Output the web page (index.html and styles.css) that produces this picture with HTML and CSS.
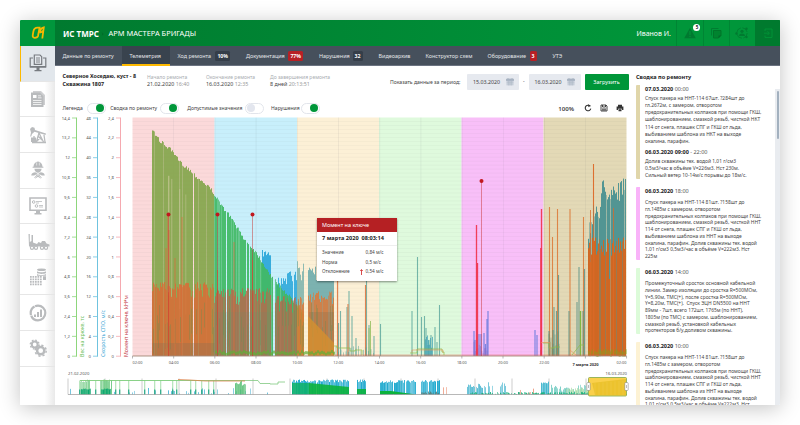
FILE: index.html
```html
<!DOCTYPE html>
<html lang="ru">
<head>
<meta charset="utf-8">
<title>АРМ мастера бригады</title>
<link rel="stylesheet" href="styles.css">
</head>
<body>
<div class="app">
  <aside class="rail">
    <div class="logo"><svg viewBox="0 0 14 14"><path d="M3.800 11.800C1.800 11.800 1.500 10.500 1.800 8.800L2.400 5.400C2.800 3 4.200 1.600 6.600 1.600H8.600L7 10C6.600 11.500 5.500 11.800 3.800 11.800ZM8.800 6.600C9 3.500 10.500 1.700 12.800 1.300L11.300 12.500M8.800 6.600C10.300 6.500 11.300 5.800 12 4.800" fill="none" stroke="#f5b800" stroke-width="1.800"/></svg></div>
    <div class="rail-item active"><svg viewBox="0 0 18 18"><g fill="none" stroke="#777b80" stroke-width="1.200"><path d="M4 4H1.200V13H16.800V4H14"/><path d="M5.300 1H11L12.700 2.700V10.300H5.300Z" fill="#e6eaef"/><path d="M7 4H11M7 6H11M7 8H11" stroke-width=".9"/></g><path d="M1 12H17V13.500H1ZM7.500 13.500H10.500V16H7.500ZM5.500 16H12.500V17.200H5.500Z" fill="#777b80"/></svg></div>
    <div class="rail-item"><svg viewBox="0 0 18 18"><path d="M4 1H12L16 5V15H14V6L11 3H4Z" opacity=".7"/><path d="M2 2.500H11L14.500 6V17H2ZM4 5V8H7.500V5ZM9 5.500V6.300H12V5.500ZM9 7.500V8.300H12.500V7.500ZM4 10V10.800H12.500V10ZM4 12V12.800H12.500V12ZM4 14V14.800H12.500V14Z" fill-rule="evenodd"/></svg></div>
    <div class="rail-item"><svg viewBox="0 0 18 18"><path d="M1 3L3 1L5.500 1.800L6 4L17 7.500L16.500 9L5.500 5.800L3 8L2.200 10.500H1.200L2 6.500Z"/><path d="M10 7L7 17M10 7L15 17M9 10L13 14M12 11L8 15M3 16.500H17M3 12V16M5 10V16M15 9L16 16" fill="none" stroke="#b9bbbd" stroke-width="1.300"/><path d="M2 11.500H7V16H2Z"/></svg></div>
    <div class="rail-item"><svg viewBox="0 0 18 20"><path d="M4 6.500C4 3 6 1 9 .5C12 1 14 3 14 6.500H15V7.500H3V6.500ZM5 8.500H13C13 11 11 13 9 13S5 11 5 8.500ZM1.500 16C1.500 13.500 4 12.500 6 12.500L9 14.500L12 12.500C14 12.500 16.500 13.500 16.500 16H13L12 15H6L5 16Z"/><path d="M5 18.500L7 16.800H11L13 18.500M6 15L12 19M12 15L6 19" stroke="#b9bbbd" fill="none" stroke-width="1"/><path d="M7.500 1.500V5M10.500 1.500V5" stroke="#fff" stroke-width=".6"/></svg></div>
    <div class="rail-item"><svg viewBox="0 0 18 18"><g fill="none" stroke="#b9bbbd"><path d="M1 1H17V13.200H1Z" stroke-width="1.600"/><circle cx="4.700" cy="5" r="1.300"/><circle cx="7.500" cy="9" r="1.300"/><path d="M7 4.500H13M10 8.500H14M10 10H14M7 6H10" stroke-width=".8"/></g><path d="M7 14H11V16H12.500V17.500H5.500V16H7Z"/></svg></div>
    <div class="rail-item"><svg class="wide" viewBox="0 0 22 18"><path d="M.5 1H1.800V9L3.500 8V2H5V9.500L9 11L10.500 9L13 10L14 8H17L18.500 10.500L21.500 11.500V13.500H1Z"/><g fill="#fff" stroke="#b9bbbd" stroke-width="1.200"><circle cx="4" cy="14.800" r="1.600"/><circle cx="8" cy="14.800" r="1.600"/><circle cx="14" cy="14.800" r="1.600"/><circle cx="18" cy="14.800" r="1.600"/></g></svg></div>
    <div class="rail-item"><svg viewBox="0 0 18 18"><ellipse cx="12.500" cy="1.800" rx="4.500" ry="1.300"/><path d="M8 3.300C10 4.600 15 4.600 17 3.300V5C15 6.200 10 6.200 8 5ZM8 6.100C10 7.400 15 7.400 17 6.100V7.700H8ZM14 8.300H17V12H14Z"/><path d="M1 8.900H13.500M1 11.400H13.500M1 13.900H13.500M1 16.400H13.500" stroke="#b9bbbd" stroke-width="1.700" stroke-dasharray="1.700 .8" fill="none"/></svg></div>
    <div class="rail-item"><svg viewBox="0 0 18 18"><circle cx="9" cy="9" r="7.300" fill="none" stroke="#b9bbbd" stroke-width="2.200" stroke-dasharray="20 .6 10 .6"/><path d="M5 10.500H7V13H5ZM8 8H10V13H8ZM11 5.500H13V13H11Z"/></svg></div>
    <div class="rail-item"><svg viewBox="0 0 18 18"><g fill="none" stroke="#b9bbbd"><circle cx="5.700" cy="5.500" r="2.900" stroke-width="2"/><circle cx="5.700" cy="5.500" r="4.400" stroke-width="1.400" stroke-dasharray="1.700 1.750"/><circle cx="11.700" cy="11.700" r="3.600" stroke-width="2.500"/><circle cx="11.700" cy="11.700" r="5.500" stroke-width="1.500" stroke-dasharray="2.200 2.120"/></g></svg></div>
    <div class="rail-rest"></div>
  </aside>
  <div class="body">
    <header class="top">
      <span class="brand">ИС ТМРС</span><span class="chev">›</span><span class="place">АРМ МАСТЕРА БРИГАДЫ</span>
      <span class="user">Иванов И.</span>
      <div class="act"><svg viewBox="0 0 12 12"><path d="M6 .8L11.800 11.200H.2Z"/><path d="M6 4V8M6 8.800V10" stroke="#009438" stroke-width="1.200"/></svg><b class="dot">5</b></div>
      <div class="act"><svg viewBox="0 0 12 12"><path d="M1.500 8.500V1.500H8.500" fill="none" stroke="#007a30" stroke-width=".9"/><path d="M3.500 3.500H11V8.500L8.500 11H3.500Z" fill="#00842f" stroke="#007329" stroke-width=".9"/><path d="M8.500 11V8.500H11Z" fill="#00682a"/></svg></div>
      <div class="act"><svg class="big" viewBox="0 0 14 12"><circle cx="7" cy="6" r="5.200" fill="none" stroke="#007a30" stroke-width=".8" stroke-dasharray="6.500 1.600"/><circle cx="7" cy="4.300" r="1.600"/><path d="M4 9C4 5.800 10 5.800 10 9Z"/><circle cx="1.500" cy="6.500" r="1.200"/><circle cx="11.500" cy="1.700" r="1.200"/><circle cx="11.500" cy="10" r="1.200"/></svg></div>
      <div class="act exit"><svg viewBox="0 0 12 12"><path d="M3 4V2H10V10.500H3V8.500M2 6.200H7M5.500 4.300L7.400 6.200L5.500 8.100" fill="none" stroke="#009438" stroke-width=".9"/></svg></div>
    </header>
    <nav class="tabs">
      <div class="tab t1">Данные по ремонту</div>
      <div class="tab t2 on">Телеметрия</div>
      <div class="tab t3">Ход ремонта<b>10%</b></div>
      <div class="tab t4">Документация<b class="red">77%</b></div>
      <div class="tab t5">Нарушения<b>32</b></div>
      <div class="tab t6">Видеоархив</div>
      <div class="tab t7">Конструктор схем</div>
      <div class="tab t8">Оборудование<b class="red">3</b></div>
      <div class="tab t9">УТЭ</div>
    </nav>
    <div class="content">
      <main class="work">
        <section class="info">
          <div class="well">Северное Хоседаю, куст - 8<br>Скважина 1807</div>
          <div class="fact f1"><i>Начало ремонта</i><span>21.02.2020 <em>16:40</em></span></div>
          <div class="fact f2"><i>Окончание ремонта</i><span>16.03.2020 <em>12:35</em></span></div>
          <div class="fact f3"><i>До завершения ремонта</i><span>8 дней <em>20:13:51</em></span></div>
          <div class="period">Показать данные за период:</div>
          <div class="date">15.03.2020<svg viewBox="0 0 8 8"><path d="M.5 1H7.500V7.500H.5Z" fill="#cdd4de"/><path d="M.5 1H7.500V2.800H.5ZM2 0V1.500M6 0V1.500" fill="#a7b2c1" stroke="#a7b2c1" stroke-width=".8"/><path d="M.5 4.500H7.500M.5 6H7.500M2.500 3V7.500M4 3V7.500M5.500 3V7.500" stroke="#a7b2c1" stroke-width=".4"/></svg></div>
          <div class="dash">-</div>
          <div class="date">16.03.2020<svg viewBox="0 0 8 8"><path d="M.5 1H7.500V7.500H.5Z" fill="#cdd4de"/><path d="M.5 1H7.500V2.800H.5ZM2 0V1.500M6 0V1.500" fill="#a7b2c1" stroke="#a7b2c1" stroke-width=".8"/><path d="M.5 4.500H7.500M.5 6H7.500M2.500 3V7.500M4 3V7.500M5.500 3V7.500" stroke="#a7b2c1" stroke-width=".4"/></svg></div>
          <div class="load">Загрузить</div>
        </section>
        <section class="switches">
          <span class="s1">Легенда</span><u class="sw"></u>
          <span class="s2">Сводка по ремонту</span><u class="sw"></u>
          <span class="s3">Допустимые значения</span><u class="sw off"></u>
          <span class="s4">Нарушения</span><u class="sw"></u>
          <b class="zoomv">100%</b>
          <svg class="tool" viewBox="0 0 8 8"><path d="M6.300 2.300A2.800 2.800 0 1 0 6.800 4.600" fill="none" stroke="#333" stroke-width="1.100"/><path d="M4 .2L6.600 1.500L4.400 3.200Z" fill="#333"/></svg>
          <svg class="tool" viewBox="0 0 8 8"><path d="M1 1H6L7 2V7H1ZM2.500 1V3H5.500V1M2 5H6M2 6H6" fill="none" stroke="#333" stroke-width=".9"/></svg>
          <svg class="tool" viewBox="0 0 8 8"><path d="M2 .8H6V2.500H2ZM.6 2.600H7.400V6H6V4.800H2V6H.6ZM2.500 5.300H5.500V7.300H2.500Z" fill="#333"/></svg>
        </section>
        <div class="plot">
          <svg id="chart" viewBox="55 114 577 291"></svg>
          <div class="tip">
            <div class="tip-head">Момент на ключе</div>
            <div class="tip-date">7 марта 2020&nbsp; 08:03:14</div>
            <div class="tip-rows">
              <span>Значение</span><span></span><span>0,84 м/с</span>
              <span>Норма</span><span></span><span>0,5 м/с</span>
              <span>Отклонение</span><span class="up"><svg viewBox="0 0 3 6"><path d="M1.500 6V1M.3 2L1.500.5L2.700 2" fill="none" stroke="#d02020" stroke-width=".8"/></svg></span><span>0,54 м/с</span>
            </div>
          </div>
        </div>
      </main>
      <aside class="log">
        <h3>Сводка по ремонту</h3>
        <div class="log-body">
          <div class="entries">
            <article class="e1">
              <h4><b>07.03.2020</b> 00:00</h4>
              <p>Спуск пакера на ННТ-114 67шт. ?284шт до<br>гл.2672м, с замером, отворотом<br>предохранительных колпаков при помощи ГКШ,<br>шаблонированием, смазкой резьб, чисткой НКТ<br>114 от снега, плашек СПГ и ГКШ от льда,<br>выбиванием шаблона из НКТ на выходе<br>окалина, парафин.</p>
              <h4 class="second"><b>06.03.2020 09:00</b> - 22:00</h4>
              <p>Долив скважины тех. водой 1,01 г/см3<br>0,5м3/час в объёме V=226м3. Нст 230м.<br>Сильный ветер 10-14м/с порывы до 18м/с.</p>
            </article>
            <article class="e2">
              <h4><b>06.03.2020</b> 18:00</h4>
              <p>Спуск пакера на ННТ-114 81шт. ?158шт до<br>гл.1485м с замером, отворотом<br>предохранительных колпаков при помощи ГКШ,<br>шаблонированием, смазкой резьб, чисткой ННТ<br>114 от снега, плашек СПГ и ГКШ от льда,<br>выбиванием шаблона из ННТ на выходе<br>окалина, парафин. Долив скважины тех. водой<br>1,01 г/см3 0,5м3/час в объёме V=222м3. Нст<br>225м</p>
            </article>
            <article class="e3">
              <h4><b>06.03.2020</b> 14:00</h4>
              <p>Промежуточный сросток основной кабельной<br>линии. Замер изоляции до сростка R=500МОм,<br>Y=5,90м, ТМС(+), после сростка R=500МОм,<br>Y=8,20м, ТМС(+).&nbsp; Спуск ЭЦН DN5500 на ННТ<br>89мм - 7шт, всего 172шт, 1765м (по ННТ),<br>1805м (по ТМС) с замером, шаблонированием,<br>смазкой резьб, установкой кабельных<br>протекторов б/у,доливом скважины.</p>
            </article>
            <article class="e4">
              <h4><b>06.03.2020</b> 10:00</h4>
              <p>Спуск пакера на ННТ-114 81шт. ?158шт до<br>гл.1485м с замером, отворотом<br>предохранительных колпаков при помощи ГКШ,<br>шаблонированием, смазкой резьб, чисткой ННТ<br>114 от снега, плашек СПГ и ГКШ от льда,<br>выбиванием шаблона из ННТ на выходе<br>окалина, парафин. Долив скважины тех. водой<br>1,01 г/см3 0,5м3/час в объёме V=222м3. Нст</p>
            </article>
          </div>
          <div class="scroll"><div class="thumb"></div></div>
        </div>
      </aside>
    </div>
  </div>
</div>
<script src="chart.js"></script>
</body>
</html>
```

FILE: styles.css
```css
* { box-sizing: border-box; }
body { margin: 0; width: 800px; height: 425px; overflow: hidden; background: #fff; padding: 20px; font-family: "Noto Sans", "Open Sans", sans-serif; font-size: 5px; color: #444; }
.app { display: flex; width: 760px; height: 385px; border-radius: 1px; overflow: hidden; background: #fff; }
body::before { content: ""; position: absolute; left: 20px; top: 20px; width: 760px; height: 385px; box-shadow: 0 3px 20px rgba(0,0,0,.24); z-index: -1; }
b { font-weight: 700; }

.rail { width: 35px; flex: none; display: flex; flex-direction: column; background: linear-gradient(90deg, #fff 70%, #e9e9e9); }
.logo { height: 26px; flex: none; background: #00963c; display: flex; align-items: center; justify-content: center; }
.logo svg { width: 14px; height: 14px; }
.rail-item { height: 35.65px; flex: none; display: flex; align-items: center; justify-content: center; border-bottom: 1px solid #e6e6e6; }
.rail-item svg { width: 18px; height: 18px; fill: #b9bbbd; }
.rail-item svg.wide { width: 22px; margin-left: 3px; }
.rail-item.active { background: #e2e7ec; border-left: 1px solid #fdb900; }
.rail-rest { flex: 1; }

.body { flex: 1; min-width: 0; display: flex; flex-direction: column; }
.top { height: 26px; flex: none; display: flex; align-items: center; padding-left: 8px; color: #fff; background: linear-gradient(90deg, #007a2f, #00963a 85%); white-space: nowrap; }
.brand { width: 38.500px; font-size: 8px; font-weight: 700; }
.chev { width: 7px; color: #006226; font-size: 7px; }
.place { font-size: 7.450px; flex: 1; }
.user { width: 40px; font-size: 7px; }
.act { position: relative; width: 26.2px; height: 26px; border-left: 1px solid #008534; display: flex; align-items: center; justify-content: center; }
.act svg { width: 12px; height: 12px; fill: #007a30; }
.act svg.big { width: 14px; }
.act.exit { width: 25px; background: #007a2e; border: 0; }
.dot { position: absolute; left: 16px; top: 4px; width: 7px; height: 7px; border-radius: 50%; background: #fff; color: #222; font-size: 4.500px; line-height: 7px; text-align: center; }

.tabs { height: 20px; flex: none; display: flex; background: #46505c; color: #e4e6e9; font-size: 5.450px; white-space: nowrap; border-bottom: 1px solid #6b7381; }
.tab { height: 19px; display: flex; align-items: center; padding-left: 8px; flex: none; }
.tab.on { background: #39434e; border-bottom: 2px solid #fdb900; height: 20px; padding-top: 1px; }
.tab b { margin-left: auto; margin-right: 8px; height: 10px; line-height: 10px; padding: 0 2px; border-radius: 1.500px; background: #353e49; color: #fff; font-size: 5.200px; }
.tab b.red { background: #b72025; }
.t1 { width: 66.500px; padding-left: 7.500px; font-size: 5.300px; }
.t2 { width: 48px; }
.t3 { width: 68.500px; }
.t4 { width: 73px; }
.t5 { width: 59.500px; }
.t6 { width: 47px; }
.t7 { width: 62px; }
.t8 { width: 65px; }

.content { flex: 1; min-height: 0; display: flex; }
.work { width: 577px; flex: none; display: flex; flex-direction: column; }
.info { height: 31px; flex: none; display: flex; padding: 7px 0 0 7.500px; white-space: nowrap; }
.well { width: 84.500px; font-size: 5.350px; font-weight: 700; color: #222; line-height: 7.600px; }
.fact { line-height: 7.800px; font-size: 5.350px; padding-top: .5px; }
.fact i { display: block; font-style: normal; color: #a9adb1; font-size: 5px; }
.fact em { font-style: normal; color: #999; }
.fact span { display: block; }
.f1 { width: 59px; }
.f2 { width: 64px; }
.f3 { width: 120px; }
.period { width: 77px; line-height: 18px; font-size: 5.100px; }
.date { width: 52px; height: 16px; background: #e6e9ef; border-radius: 1px; display: flex; align-items: center; justify-content: space-between; padding: 0 5.500px 0 6px; font-size: 5.300px; margin-top: 1px; }
.date svg { width: 8px; height: 8px; }
.dash { width: 9.500px; text-align: center; line-height: 17px; }
.load { width: 44px; height: 16px; margin: 1px 0 0 4px; background: #009639; color: #fff; border-radius: 1px; text-align: center; line-height: 16px; font-size: 5.500px; }

.switches { height: 17px; flex: none; display: flex; align-items: center; padding: 5px 0 0 7.500px; font-size: 5.050px; white-space: nowrap; }
.sw { width: 19px; height: 11px; flex: none; border: 1px solid #e2e5eb; border-radius: 6px; display: flex; align-items: center; justify-content: flex-end; padding-right: 1px; }
.sw::before { content: ""; width: 8px; height: 8px; border-radius: 50%; background: #009639; }
.sw.off { justify-content: flex-start; padding-left: 1px; }
.sw.off::before { background: #e3e6ee; }
.s1 { width: 24.500px; }
.s2 { width: 55px; padding-left: 4.500px; }
.s3 { width: 66px; padding-left: 8px; }
.s4 { width: 38px; padding-left: 7.500px; }
.zoomv { margin-left: 238px; width: 26px; font-size: 6.100px; font-weight: 600; }
.tool { width: 8px; height: 8px; margin-right: 8px; flex: none; }

.plot { flex: 1; position: relative; }
#chart { display: block; width: 577px; height: 291px; }
#chart text { font-size: 4.200px; fill: #555; }
#chart .axis-title { font-size: 5.250px; }
.tip { position: absolute; left: 262px; top: 104px; width: 79.500px; height: 63px; background: #fff; box-shadow: 0 1px 2px rgba(0,0,0,.45); white-space: nowrap; }
.tip-head { height: 14px; line-height: 15px; padding-left: 5px; background: #b52023; color: #fff; font-size: 5.450px; }
.tip-date { height: 14px; line-height: 13.500px; padding-left: 5px; font-size: 5.600px; font-weight: 700; color: #222; border-bottom: 1px solid #eee; }
.tip-rows { display: grid; grid-template-columns: 38px 5.500px 1fr; grid-auto-rows: 9.500px; line-height: 9.500px; padding: 2px 0 0 5px; font-size: 4.700px; }
.up { display: flex; align-items: center; }
.up svg { width: 3px; height: 6px; }

.log { width: 148px; flex: none; display: flex; flex-direction: column; white-space: nowrap; }
.log h3 { margin: 0; height: 19px; flex: none; line-height: 7px; padding: 8px 0 0 4px; font-size: 5.600px; color: #222; }
.log-body { height: 320px; flex: none; display: flex; overflow: hidden; }
.entries { width: 143px; height: 320px; overflow: hidden; padding-left: 4px; }
.log article { border-left: 4px solid #e0d6aa; border-radius: 1px; padding-left: 5px; }
.log h4 { margin: 0; height: 10px; line-height: 9px; font-size: 5.500px; font-weight: 400; color: #555; }
.log h4 b { color: #222; }
.log p { margin: 0; font-size: 4.900px; line-height: 6.750px; color: #444; }
.e1 { height: 94px; }
.e1 p { line-height: 7.150px; }
.log h4.second { margin-top: 3px; height: 10px; }
.log .e2 { height: 73px; margin-top: 8px; border-color: #f9b3f9; }
.log .e3 { height: 65.500px; margin-top: 8px; border-color: #dcfbd9; }
.log .e4 { height: 80px; margin-top: 8.500px; border-color: #fdf2d4; }
.e2 h4, .e3 h4, .e4 h4 { margin-bottom: 2px; }
.scroll { width: 5px; background: #e9ecf0; padding: 2px 1px 0 1.500px; margin-top: 4px; }
.thumb { height: 48px; background: #a3b1bf; border-radius: 1px; }
```

FILE: chart.js
```js
const NS = "http://www.w3.org/2000/svg";
const svg = document.getElementById("chart");
let seed = 7;
const rnd = () => (seed = (seed * 16807) % 2147483647) / 2147483647;
function el(name, attrs, text) {
  const n = document.createElementNS(NS, name);
  for (const k in attrs) n.setAttribute(k, attrs[k]);
  if (text) n.textContent = text;
  svg.appendChild(n);
}
const rect = (x, y, w, h, fill, o = 1) => el("rect", { x, y, width: w, height: h, fill, opacity: o });
const line = (x1, y1, x2, y2, stroke, w = 1, o = 1) => el("line", { x1, y1, x2, y2, stroke, "stroke-width": w, opacity: o });
const bar = (x, top, fill, w = 1, o = .8) => rect(x - w / 2, top, w, BASE - top, fill, o);
const BASE = 356, L = 132.5, T = 117.5;

/* scales */
function axis(x, max, color, title, tcolor) {
  for (let i = 0; i < 13; i++) {
    const y = 118 + i * 19.85;
    line(x - 4.500, y, x, y, color, .8);
    el("text", { x: x - 6.500, y: y + 1.600, "text-anchor": "end" }, String(+(max * (12 - i) / 12).toFixed(1)).replace(".", ","));
  }
  line(x, 117.600, x, 356.600, color, 1);
  el("text", { class: "axis-title", transform: `translate(${x + 7} 357) rotate(-90)`, style: `fill:${tcolor}` }, title);
}
axis(76.500, 14.400, "#8dd67c", "Вес на крюке, тс", "#6cc05a");
axis(97.500, 48, "#6fc3df", "Скорость СПО, м/с", "#3fa9d6");
axis(120.500, 2.400, "#f5a9b0", "Момент на ключе, kН*м", "#c03038");

/* period bands and grid */
[["#fbd9da", 132.500], ["#c8effb", 214.500], ["#fcf0d6", 297], ["#dffadd", 379], ["#f8bff8", 461.500], ["#e3d9b6", 543.500]]
  .forEach(([c, x], i, a) => rect(x, T, (a[i + 1] ? a[i + 1][1] : 626.500) - x, BASE - T, c));
for (let y = 121.500; y < BASE; y += 3.970) line(L, y, 626.500, y, "#555", .5, .07);
for (let x = L + 41.200; x < 626; x += 41.200) line(x, T, x, BASE, "#667", .6, .14);

/* hook weight */
const curve = [[152.500,132],[155,133],[160,141],[170,149],[181,163],[190,170],[197,177],[202,181],[209,187],[214,193],[220,204],[227,212],[235,224],[245,240],[256,252],[263,263],[272,277],[277,283],[290,297],[302,312],[310,317],[334,343]];
const at = x => {
  for (let i = 1; i < curve.length; i++) if (x <= curve[i][0]) {
    const [a, b] = curve[i - 1], [c, d] = curve[i];
    return b + (d - b) * (x - a) / (c - a);
  }
  return 343;
};
/* speed behind the weight */
for (let x = 262.500; x < 271; x += 1) bar(x, 250 + rnd() * 7, "#2fa8da", 1, .95);
for (let x = 276.500; x < 297; x += 1) if (rnd() > .12) bar(x, 272 + rnd() * 18 - (x - 276) * .4, "#2fa8da", 1, .9);
for (let x = 297.500; x < 304; x += 1) bar(x, 260 + rnd() * 22, "#6aa9a6", 1, .75);
for (let x = 308.500; x < 334; x += 1) bar(x, 262 + rnd() * 20, "#5ba3a6", 1, .8);
for (let x = 152.500; x < 304; x += 1) {
  if ([193.500, 226.500, 246.500, 249.500, 273.500, 274.500].includes(x)) continue;
  const c = x < 214.500 ? "#84a64c" : "#41b964";
  bar(x, at(x) + rnd() * 4 - 2, c, 1, rnd() > .14 ? .93 : .72);
}
el("path", { d: "M297 305L304 312V356H297Z", fill: "#b0972e", opacity: .7 });
[[168.500,.8],[171.500,.5],[179.500,.5],[185.500,.4]].forEach(([x, o]) => rect(x, at(x) + 28, .7, 120, "#f5dfc8", o));

/* torque */
for (let x = 152.500; x < 334; x += 1) {
  if ([193.500, 226.500, 249.500, 271.500, 272.500, 273.500, 274.500, 304.500, 305.500, 306.500, 307.500].includes(x)) continue;
  const top = x < 214 ? 282 : x < 272 ? 288 : x < 304 ? 296 : 291;
  const c = x < 214 ? "#d96c36" : x < 297 ? "#b56a4c" : "#dd7838";
  bar(x, top + rnd() * 9 + (rnd() > .85 ? 8 : 0), c, 1, rnd() > .25 ? .85 : .6);
  if (rnd() > .72) rect(x - .3, 300 + rnd() * 30, .8, 25, "#5d9455", .4);
}
rect(152.500, 343, 62, 13, "#79705c", .25);
rect(214.500, 312, 58, 44, "#6b8f70", .15);
for (const [x, y] of [[168, 215], [169, 230], [166, 248], [182, 217], [175, 258], [217.500, 270], [234, 242], [252.500, 260]]) bar(x, y, "#e0693a", .9, .75);
rect(309, 312, 25, 44, "#77704f", .25);
el("path", { d: "M308 316L334 343V356H308Z", fill: "#d6902e", opacity: .8 });
for (let x = 215; x < 334; x += 2) rect(x, 353 - rnd() * 3, 2, 3, "#62ae38", .7);

/* scattered peaks */
const peaks = (list, c, w = 1, o = .75) => list.forEach(([x, y]) => bar(x, y, c, w, o));
peaks([[338.500,323],[340.500,311],[349,291],[352,316],[356,338],[366.500,280],[369,325],[374,336],[380.500,324],[412,311],[417.500,257],[421.500,317],[424.500,316],[426,328],[429,340],[431,335],[435,327],[439.500,305],[437,342],[428,345],[347,307]], "#4f9f95", 1.100);
peaks([[337.500,280],[348,304],[365.500,285]], "#df7740", 1.100, .9);
peaks([[370.500,321],[369,328]], "#88ba52");
for (let x = 425.500; x < 433; x += 1) bar(x, 334 + rnd() * 14, "#3fa0b4", .9);
for (let x = 336; x < 376; x += 2.500) bar(x, 344 + rnd() * 9, "#4f9f95", .8, .6);
peaks([[474,331],[475,340],[479,334],[481,334],[484,333],[487,319],[488,311],[485.500,344],[535,330],[537,335],[541,350]], "#5672d8", 1.200);
for (let x = 474; x < 488; x += 1.300) bar(x, 341 + rnd() * 12, "#8a5fc0", .9, .5);
peaks([[476.500,225],[477.500,263],[541.500,209],[540.800,248]], "#ef3048", 1.300, .9);
peaks([[549.500,207],[552.500,237],[557.500,209],[570,209],[583.500,217],[593.500,164]], "#dc7634", 1.100, .85);
peaks([[554,307],[553,330],[556.500,311],[558.500,275],[569,311],[577,302],[579,267],[584.500,269],[583,311],[549,331]], "#4d8e84", 1.100, .75);
for (let x = 549; x < 560; x += 1) bar(x, 330 + rnd() * 20, "#5b8d70", .8, .6);
bar(580.500, 311, "#72b536", 1.300, .9);

/* last section */
for (let x = 588.500; x < 626.500; x += 1) {
  const t = x < 592 ? 222 + rnd() * 20 : x < 601 ? 203 + rnd() * 25 - (x - 592) : 178 + rnd() * 24;
  bar(x, t, "#458f90", 1, rnd() > .2 ? .92 : .45);
}
for (let x = 588.500; x < 626.500; x += 1) {
  bar(x, 237 + rnd() * 19 + (rnd() > .85 ? 25 : 0), "#d6641c", 1, rnd() > .15 ? .95 : .55);
  rect(x, 352 - rnd() * 3, 1, 5, "#7ea81e", .8);
}
peaks([[590.500,210],[593.500,164],[613.500,208]], "#dc6a28", 1);

/* baselines */
line(L, BASE, 626.500, BASE, "#a58b78", .9);
line(334, 355, 626, 355, "#e05a4a", .6, .7);
el("path", { d: "M334 346H337V348H350V351H355V350H362V355M410 353H417V349H442V352H444V355M543 343H549V348H554V347H560M572 355L580 345H584", fill: "none", stroke: "#8ebc48", "stroke-width": .7 });
el("path", { d: "M412 353V350H443V353M541 342.500H550V354M570 350L576 355", fill: "none", stroke: "#e9955c", "stroke-width": .6 });

/* time labels */
["02:00","04:00","06:00","08:00","10:00","12:00","14:00","16:00","18:00","20:00","22:00","7 марта 2020","02:00"].forEach((s, i) => {
  const x = L + i * 41.170;
  line(x, 356, x, 358.500, "#888", .6);
  el("text", { x: i === 11 ? 585.500 : i === 12 ? 626.500 : i ? x : 132.500, y: i === 11 ? 366 : 364.300, "text-anchor": i === 12 ? "end" : i ? "middle" : "start", style: i === 11 ? "font-weight:700;fill:#333;font-size:4px" : "font-size:3.900px" }, s);
});

/* violation pins */
[[168.500, 214.500], [217.500, 214.500], [252.500, 214.500], [481.500, 181]].forEach(([x, y]) => {
  line(x, y, x, BASE, "#c8302e", .8, .6);
  el("circle", { cx: x, cy: y, r: 2, fill: "#c1181f" });
});

/* overview strip */
const MB = 394.500;
const mini = (x, h, c, w = .9, o = .8) => rect(x, MB - h, w, h, c, o);
function block(a, b, h, c, density, vary = 3) {
  for (let x = a; x < b; x += 1) if (rnd() < density) mini(x, h - rnd() * vary, c, .95, .6 + rnd() * .4);
}
for (let x = 68; x < 620; x += 37) line(x, 378.500, x, MB, "#999", .5);
block(80, 92, 15, "#7fd091", .9); block(81, 91, 6, "#00a36b", 1, 1);
block(100, 112, 15, "#6fcb84", .95); block(101, 111, 6, "#00a36b", 1, 1);
block(68, 282, 7, "#57b9d8", .16, 6);
for (const x of [79, 95, 115, 119, 128, 144, 154, 160, 172, 176, 190, 195, 201, 208, 213, 240]) { mini(x, 14, "#9bdba2", 1.300, .7); mini(x, 5, "#16a184", 1.300); }
line(80, 380.500, 245, 380.500, "#7dcc7a", .9);
el("path", { d: "M178 379.500L190 380L205 381H245", fill: "none", stroke: "#de8650", "stroke-width": .8 });
block(235, 246, 14, "#5fc27c", .95, 5);
el("path", { d: "M245 380.500H258L260 383.500H270V384H278V382H285", fill: "none", stroke: "#82c982", "stroke-width": .8 });
block(292, 349, 15, "#12a5cc", .96); block(357, 366, 15, "#12a5cc", .95);
rect(292, 383, 17, 11.500, "#0bb262", .8);
el("path", { d: "M309 383L349 387V394.500H309Z", fill: "#0bb23c", opacity: .9 });
rect(357, 389, 9, 5.500, "#0bb23c", .9);
block(380, 416, 14.500, "#12a5cc", .93); block(421, 440, 14.500, "#12a5cc", .93);
el("path", { d: "M380 391L391 391L416 394.500H380Z", fill: "#0bb23c" });
block(421, 440, 3, "#557c78", .7, 2);
block(443, 448, 9, "#ed9a80", .5, 7);
block(466, 486, 11, "#54bad2", .85, 5); block(488, 506, 13, "#54bad2", .6, 5); block(541, 549, 14, "#35b2cb", 1);
block(518, 538, 9, "#ed9a80", .4, 8); block(550, 588, 10, "#6bc8bf", .6, 8); block(566, 588, 7, "#a7dca8", .8, 3);
block(470, 588, 2.500, "#15b07a", .8, 2);
line(68, MB, 627, MB, "#999", .7);
el("text", { x: 68, y: 375 }, "21.02.2020");
el("text", { x: 627, y: 375, "text-anchor": "end" }, "16.03.2020");
el("rect", { x: 588.500, y: 377.500, width: 38, height: 18.500, rx: 1, fill: "#fad04c", stroke: "#80a846", "stroke-width": .8 });
el("path", { d: "M592 383L626 379V395H595Z", fill: "#e5bd22", opacity: .7 });
for (let x = 595; x < 626; x += 4) line(x, 383 - (x - 595) / 12, x, 395, "#f3cf55", .7, .6);
for (const x of [588.500, 626.500]) {
  el("rect", { x: x - 1.700, y: 382.500, width: 3.400, height: 8, rx: 1, fill: "#fff", stroke: "#777", "stroke-width": .5 });
  line(x, 385, x, 388, "#777", .5);
}
```
